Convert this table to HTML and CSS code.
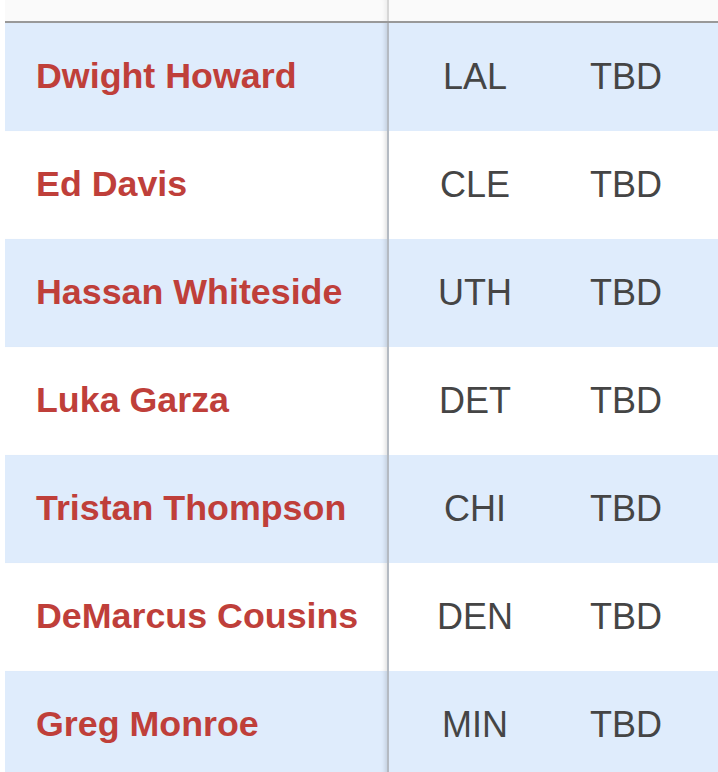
FILE: index.html
```html
<!DOCTYPE html>
<html>
<head>
<meta charset="utf-8">
<link rel="stylesheet" href="styles.css">
</head>
<body>
<div class="table">
  <div class="row head">
    <div class="cell name"></div>
    <div class="cell team"></div>
    <div class="cell val"></div>
  </div>
  <div class="row alt">
    <div class="cell name">Dwight Howard</div>
    <div class="cell team">LAL</div>
    <div class="cell val">TBD</div>
  </div>
  <div class="row">
    <div class="cell name">Ed Davis</div>
    <div class="cell team">CLE</div>
    <div class="cell val">TBD</div>
  </div>
  <div class="row alt">
    <div class="cell name">Hassan Whiteside</div>
    <div class="cell team">UTH</div>
    <div class="cell val">TBD</div>
  </div>
  <div class="row">
    <div class="cell name">Luka Garza</div>
    <div class="cell team">DET</div>
    <div class="cell val">TBD</div>
  </div>
  <div class="row alt">
    <div class="cell name">Tristan Thompson</div>
    <div class="cell team">CHI</div>
    <div class="cell val">TBD</div>
  </div>
  <div class="row">
    <div class="cell name">DeMarcus Cousins</div>
    <div class="cell team">DEN</div>
    <div class="cell val">TBD</div>
  </div>
  <div class="row alt">
    <div class="cell name">Greg Monroe</div>
    <div class="cell team">MIN</div>
    <div class="cell val">TBD</div>
  </div>
</div>
</body>
</html>
```
FILE: styles.css
```css
html, body {
  margin: 0;
  padding: 0;
  background: #ffffff;
  overflow: hidden;
}
body {
  font-family: "Liberation Sans", Arial, sans-serif;
  padding-left: 5px;
}
.table {
  display: flex;
  flex-direction: column;
  width: 713px;
}
.row {
  display: grid;
  grid-template-columns: 384px 172px 157px;
  height: 108px;
  align-items: stretch;
  background: #ffffff;
}
.row.alt {
  background: #dfecfc;
}
.row.head {
  height: 21px;
  background: #fafafa;
  border-bottom: 2px solid #999999;
}
.cell {
  display: flex;
  align-items: center;
  font-size: 36px;
  color: #454545;
  white-space: nowrap;
  padding-bottom: 1px;
}
.cell.name {
  padding-left: 31px;
  font-size: 35.8px;
  font-weight: bold;
  color: #bf3f3a;
  border-right: 2px solid #b4bac2;
  box-shadow: inset -5px 0 4px -3px rgba(0, 0, 0, 0.12);
}
.head .cell.name {
  border-right-color: #d6d6d6;
  box-shadow: inset -5px 0 4px -3px rgba(0, 0, 0, 0.06);
}
.cell.team {
  justify-content: center;
}
.cell.val {
  justify-content: flex-start;
  padding-left: 29px;
}
```
